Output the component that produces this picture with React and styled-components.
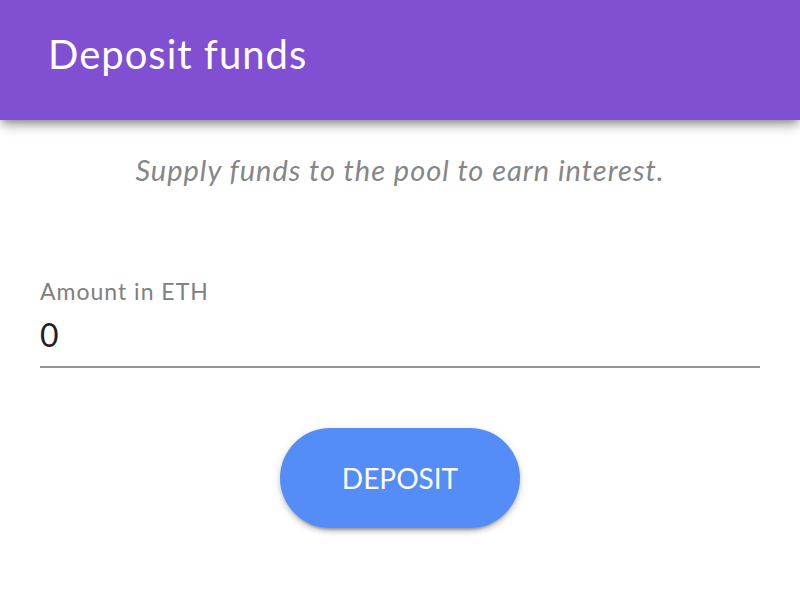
import React, { useState } from "react";
import styled, { createGlobalStyle } from "styled-components";

const GlobalStyle = createGlobalStyle`
  * { box-sizing: border-box; }
  body {
    margin: 0;
    background: #fff;
    font-family: Avenir, "Avenir Next", Lato, sans-serif;
  }
`;

const Header = styled.header`
  display: flex;
  align-items: center;
  height: 120px;
  padding: 0 48px 12px;
  background: #8150d2;
  color: #fff;
  box-shadow:
    0 4px 8px -2px rgba(0, 0, 0, 0.3),
    0 8px 12px -2px rgba(0, 0, 0, 0.2),
    0 2px 16px -2px rgba(0, 0, 0, 0.12);
`;

const Title = styled.h1`
  margin: 0;
  font-size: 40px;
  line-height: 52px;
  font-weight: 400;
  letter-spacing: 1px;
`;

const Form = styled.form`
  display: flex;
  flex-direction: column;
  padding: 32px 40px;
`;

const Intro = styled.p`
  margin: 0;
  text-align: center;
  font-size: 29px;
  line-height: 36px;
  font-style: italic;
  letter-spacing: 1px;
  color: #868686;
`;

const Field = styled.div`
  display: flex;
  flex-direction: column;
  margin-top: 88px;
`;

const Label = styled.label`
  font-size: 23px;
  line-height: 30px;
  letter-spacing: 1px;
  color: #808080;
`;

const Input = styled.input`
  width: 100%;
  height: 62px;
  padding: 0 0 4px;
  border: 0;
  border-bottom: 2px solid #949494;
  border-radius: 0;
  outline: 0;
  background: transparent;
  font: inherit;
  font-size: 32px;
  color: #212121;
`;

const DepositButton = styled.button`
  align-self: center;
  width: 240px;
  height: 100px;
  margin-top: 60px;
  border: 0;
  border-radius: 50px;
  background: #548cf8;
  color: #fff;
  font: inherit;
  font-size: 28px;
  box-shadow:
    0 6px 2px -4px rgba(0, 0, 0, 0.2),
    0 4px 4px rgba(0, 0, 0, 0.14),
    0 2px 10px rgba(0, 0, 0, 0.12);
  cursor: pointer;
`;

export default function App() {
  const [amount, setAmount] = useState("0");

  return (
    <>
      <GlobalStyle />
      <Header>
        <Title>Deposit funds</Title>
      </Header>
      <Form onSubmit={(event) => event.preventDefault()}>
        <Intro>Supply funds to the pool to earn interest.</Intro>
        <Field>
          <Label htmlFor="amount">Amount in ETH</Label>
          <Input
            id="amount"
            inputMode="decimal"
            value={amount}
            onChange={(event) => setAmount(event.target.value)}
          />
        </Field>
        <DepositButton type="submit">DEPOSIT</DepositButton>
      </Form>
    </>
  );
}
